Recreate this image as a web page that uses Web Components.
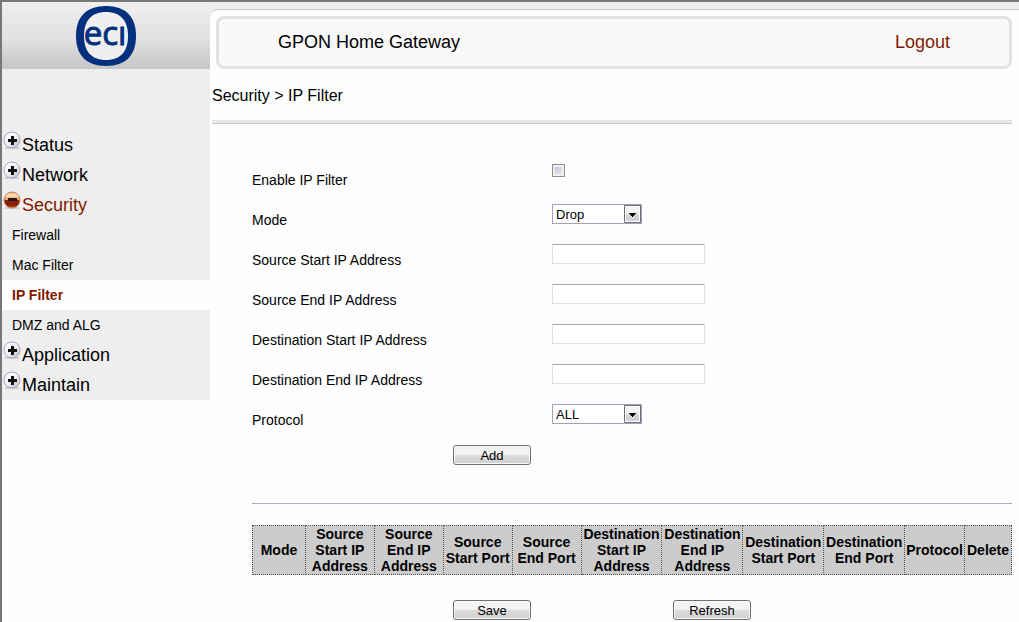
<!DOCTYPE html>
<html lang="en">
<head>
<meta charset="utf-8">
<meta name="viewport" content="width=device-width, initial-scale=1">
<title>GPON Home Gateway</title>
<style>
  body {
    margin: 0;
    background: #fefefe;
    color: #000;
    font: 14px/16px "Liberation Sans", Arial, sans-serif;
    --accent: #7f1b00;
    --panel: #eee;
  }
</style>
</head>
<body>
<gateway-app>
  <side-menu slot="menu">
    <menu-group label="Status"></menu-group>
    <menu-group label="Network"></menu-group>
    <menu-group label="Security" open>
      <menu-entry>Firewall</menu-entry>
      <menu-entry>Mac Filter</menu-entry>
      <menu-entry active>IP Filter</menu-entry>
      <menu-entry>DMZ and ALG</menu-entry>
    </menu-group>
    <menu-group label="Application"></menu-group>
    <menu-group label="Maintain"></menu-group>
  </side-menu>
  <title-bar>GPON Home Gateway</title-bar>
  <bread-crumb>Security &gt; IP Filter</bread-crumb>
  <ip-filter></ip-filter>
</gateway-app>

<script>
class BaseElement extends HTMLElement {
  constructor() {
    super();
    this.attachShadow({ mode: "open" });
  }

  connectedCallback() {
    this.shadowRoot.innerHTML = /* html */`
    <style>* { box-sizing: border-box; } ${this.constructor.styles}</style>
    ${this.template()}`;
  }
}

class GatewayApp extends BaseElement {
  static get styles() {
    return /* css */`
      :host {
        display: flex;
        box-sizing: border-box;
        align-items: flex-start;
        min-height: 100vh;
        border: 2px solid #777;
        border-width: 2px 0 0 2px;
      }
      main {
        flex: 1;
        min-width: 0;
        padding-top: 7px;
        background: linear-gradient(var(--panel) 20px, transparent 20px);
      }
      .page {
        padding: 6px 7px 0 2px;
        border-top: 1px solid #c8c8c8;
        border-top-left-radius: 8px;
        background: #fefefe;
      }
    `;
  }

  template() {
    return /* html */`
    <slot name="menu"></slot>
    <main><div class="page"><slot></slot></div></main>`;
  }
}

class EciLogo extends BaseElement {
  static get styles() {
    return /* css */`
      :host { display: block; width: 60px; height: 60px; }
      svg { display: block; overflow: visible; }
      text {
        fill: #03307e;
        stroke: #03307e;
        font: 33px "Open Sans", "Noto Sans", sans-serif;
      }
    `;
  }

  template() {
    return /* html */`
    <svg width="60" height="60" viewBox="0 0 60 60" role="img" aria-label="eci">
      <path d="M30 0C50 0 60 11 60 30S50 60 30 60S0 49 0 30S10 0 30 0Z" fill="#03307e"/>
      <path d="M30 6C45 6 52 15 52 30S45 54 30 54S8 45 8 30S15 6 30 6Z" fill="#f0eff0"/>
      <text x="29" y="39" text-anchor="middle" stroke-width="1">ecı</text>
    </svg>`;
  }
}

class SideMenu extends BaseElement {
  static get styles() {
    return /* css */`
      :host { display: block; width: 208px; flex: none; background: var(--panel); }
      header {
        display: flex;
        justify-content: center;
        height: 67px;
        padding-top: 4px;
        background: linear-gradient(#f0f0f0, #e2e0e1 55%, #c6c6c6);
      }
      nav { padding-top: 61px; }
    `;
  }

  template() {
    return /* html */`
    <header><eci-logo></eci-logo></header>
    <nav><slot></slot></nav>`;
  }
}

class MenuGroup extends BaseElement {
  static get styles() {
    return /* css */`
      :host { display: block; }
      a {
        display: flex;
        gap: 1px;
        height: 30px;
        padding: 0 1px;
        color: inherit;
        font-size: 18px;
        line-height: 30px;
        text-decoration: none;
      }
      svg { flex: none; margin-top: 1px; }
      :host([open]) a { color: var(--accent); }
    `;
  }

  get icon() {
    return this.hasAttribute("open") ? /* html */`
      <svg width="18" height="18" viewBox="0 0 18 18" aria-hidden="true">
        <defs><linearGradient id="ball" x2="0" y2="1">
          <stop offset="0" stop-color="#e8a868"/><stop offset=".2" stop-color="#fbe3c4"/>
          <stop offset=".5" stop-color="#e09850"/><stop offset=".52" stop-color="#8a2000"/>
          <stop offset=".85" stop-color="#8a2000"/><stop offset="1" stop-color="#d08048"/>
        </linearGradient></defs>
        <path d="M2 17h14" stroke="#ccccd4" stroke-width="2"/>
        <circle cx="9" cy="9" r="8" fill="url(#ball)" stroke="#c08868"/>
        <path d="M5 7h9v3H5z" fill="#2a1420"/>
      </svg>` : /* html */`
      <svg width="18" height="18" viewBox="0 0 18 18" aria-hidden="true">
        <defs><linearGradient id="ball" x2="1" y2="1">
          <stop offset="0" stop-color="#fff"/><stop offset=".5" stop-color="#f0f0f4"/>
          <stop offset="1" stop-color="#b4b4c4"/>
        </linearGradient></defs>
        <path d="M2 17h14" stroke="#ccccd4" stroke-width="2"/>
        <circle cx="9" cy="9" r="8" fill="url(#ball)" stroke="#a9a9bd"/>
        <path d="M8 5h3v3h3v3h-3v3H8v-3H5V8h3z" fill="#111"/>
      </svg>`;
  }

  template() {
    return /* html */`
    <a href="#">${this.icon}<span>${this.getAttribute("label")}</span></a>
    <slot></slot>`;
  }
}

class MenuEntry extends BaseElement {
  static get styles() {
    return /* css */`
      :host { display: block; }
      a {
        display: block;
        padding-left: 10px;
        color: inherit;
        line-height: 30px;
        text-decoration: none;
      }
      :host([active]) a { background: #fefefe; color: var(--accent); font-weight: bold; }
    `;
  }

  template() {
    return /* html */`<a href="#"><slot></slot></a>`;
  }
}

class TitleBar extends BaseElement {
  static get styles() {
    return /* css */`
      :host {
        display: flex;
        box-sizing: border-box;
        align-items: center;
        justify-content: space-between;
        height: 53px;
        margin-left: 4px;
        padding: 0 59px 2px;
        border: 3px solid #e3e1e3;
        border-radius: 8px;
        background: #f9f9f9;
        font-size: 18px;
      }
      h1 { margin: 0; font: inherit; }
      a { color: var(--accent); text-decoration: none; }
    `;
  }

  template() {
    return /* html */`<h1><slot></slot></h1><a href="#">Logout</a>`;
  }
}

class BreadCrumb extends BaseElement {
  static get styles() {
    return /* css */`
      :host {
        display: block;
        height: 51px;
        border-bottom: 3px solid #e8e8e8;
        box-shadow: 0 1px #c8c8c8;
        font-size: 16px;
        line-height: 53px;
      }
    `;
  }

  template() {
    return /* html */`<slot></slot>`;
  }
}

class FieldRow extends BaseElement {
  static get styles() {
    return /* css */`
      :host {
        display: grid;
        grid-template-columns: 300px 1fr;
        height: 40px;
      }
      label { line-height: 40px; }
      .control { padding-top: 4px; }
      input, select {
        display: block;
        appearance: none;
        margin: 0;
        border: 1px solid #dedee4;
        border-radius: 0;
        background: #fff;
        color: #000;
        font: 13px "Liberation Sans", Arial, sans-serif;
      }
      input[type=text] {
        width: 153px;
        height: 20px;
        border-top-color: #a4a4b4;
        border-radius: 1px;
      }
      input[type=checkbox] {
        width: 13px;
        height: 13px;
        border-color: #8e8f8f;
        background: linear-gradient(135deg, #b8b8d4, #f4f4f4);
        box-shadow: inset 0 0 0 2px #f0f0f0;
      }
      .select { position: relative; width: 90px; }
      select {
        width: 100%;
        height: 20px;
        padding: 0 20px 0 3px;
        border-color: #a4a0b8;
      }
      .select svg {
        position: absolute;
        top: 1px;
        right: 0;
        pointer-events: none;
      }
    `;
  }

  get control() {
    const options = this.getAttribute("options");
    if (options) {
      return /* html */`
      <div class="select">
        <select id="field">${options.split(",").map(o => `<option>${o}</option>`).join("")}</select>
        <svg width="18" height="18" viewBox="0 0 18 18" aria-hidden="true">
          <defs><linearGradient id="face" x2="0" y2="1">
            <stop offset=".4" stop-color="#f2f2f2"/><stop offset=".6" stop-color="#d2d2d2"/>
          </linearGradient></defs>
          <path d="M.5.5h16v17H.5z" fill="#fff" stroke="#707070"/>
          <path d="M2 2h13v14H2z" fill="url(#face)"/>
          <path d="M5 8h7v1h-1v1h-1v1h-1v1H8v-1H7v-1H6V9H5z" fill="#000"/>
        </svg>
      </div>`;
    }
    return /* html */`<input id="field" type="${this.getAttribute("type") || "text"}">`;
  }

  template() {
    return /* html */`
    <label for="field">${this.getAttribute("label")}</label>
    <div class="control">${this.control}</div>`;
  }
}

class PushButton extends BaseElement {
  static get styles() {
    return /* css */`
      :host { display: block; }
      button {
        display: block;
        width: 78px;
        height: 20px;
        padding: 0;
        border: 1px solid #707070;
        border-radius: 3px;
        background: linear-gradient(#f3f3f3 45%, #dadada 55%, #cfcfcf);
        box-shadow: inset 0 0 0 1px #f8f8f8;
        color: #000;
        font: 13px "Liberation Sans", Arial, sans-serif;
      }
    `;
  }

  template() {
    return /* html */`<button type="button"><slot></slot></button>`;
  }
}

class RuleTable extends BaseElement {
  static get styles() {
    return /* css */`
      :host { display: block; }
      table {
        width: 100%;
        height: 50px;
        table-layout: fixed;
        border-collapse: collapse;
        background: #ccc;
      }
      th {
        padding: 0;
        border: 1px dotted #555;
        font-size: 14px;
        line-height: 16px;
      }
    `;
  }

  // [heading, share of the table's width]
  get columns() {
    return [
      ["Mode", 53], ["Source<br>Start IP<br>Address", 69], ["Source<br>End IP<br>Address", 69],
      ["Source<br>Start Port", 69], ["Source<br>End Port", 69],
      ["Destination<br>Start IP<br>Address", 81], ["Destination<br>End IP<br>Address", 81],
      ["Destination<br>Start Port", 81], ["Destination<br>End Port", 81],
      ["Protocol", 60], ["Delete", 47]
    ];
  }

  template() {
    const total = this.columns.reduce((sum, c) => sum + c[1], 0);
    return /* html */`
    <table>
      <thead><tr>${this.columns.map(([text, share]) =>
        `<th scope="col" style="width: calc(100% * ${share} / ${total})">${text}</th>`).join("")}</tr></thead>
    </table>`;
  }
}

class IpFilter extends BaseElement {
  static get styles() {
    return /* css */`
      :host { display: block; padding: 37px 0 2px 40px; }
      .actions { display: flex; gap: 142px; padding-left: 201px; }
      .add { padding-top: 5px; }
      hr {
        height: 1px;
        margin: 38px 0 21px;
        border: 0;
        background: #b0acc4;
      }
      .save { padding-top: 25px; }
    `;
  }

  template() {
    return /* html */`
    <form>
      <field-row label="Enable IP Filter" type="checkbox"></field-row>
      <field-row label="Mode" options="Drop,Accept"></field-row>
      <field-row label="Source Start IP Address"></field-row>
      <field-row label="Source End IP Address"></field-row>
      <field-row label="Destination Start IP Address"></field-row>
      <field-row label="Destination End IP Address"></field-row>
      <field-row label="Protocol" options="ALL,TCP,UDP"></field-row>
      <div class="actions add"><push-button>Add</push-button></div>
    </form>
    <hr>
    <rule-table></rule-table>
    <div class="actions save">
      <push-button>Save</push-button>
      <push-button>Refresh</push-button>
    </div>`;
  }
}

customElements.define("gateway-app", GatewayApp);
customElements.define("eci-logo", EciLogo);
customElements.define("side-menu", SideMenu);
customElements.define("menu-group", MenuGroup);
customElements.define("menu-entry", MenuEntry);
customElements.define("title-bar", TitleBar);
customElements.define("bread-crumb", BreadCrumb);
customElements.define("field-row", FieldRow);
customElements.define("push-button", PushButton);
customElements.define("rule-table", RuleTable);
customElements.define("ip-filter", IpFilter);
</script>
</body>
</html>
